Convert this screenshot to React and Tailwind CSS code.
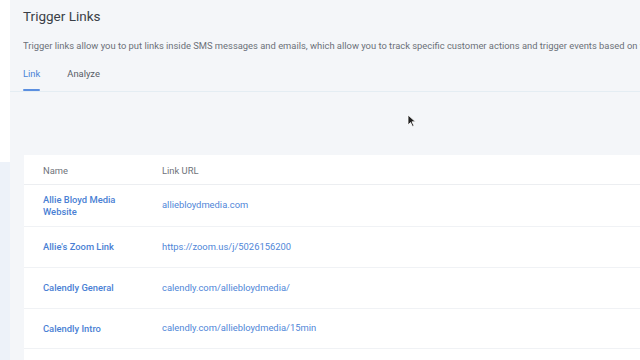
const rows = [
  { name: ["Allie Bloyd Media", "Website"], url: "alliebloydmedia.com", h: "h-[42px]" },
  { name: ["Allie's Zoom Link"], url: "https://zoom.us/j/5026156200", h: "h-[41px]" },
  { name: ["Calendly General"], url: "calendly.com/alliebloydmedia/", h: "h-[41px]" },
  { name: ["Calendly Intro"], url: "calendly.com/alliebloydmedia/15min", h: "h-[40px]" },
];

export default function App() {
  return (
    <div
      className="relative w-[640px] h-[360px] overflow-hidden flex bg-[#f4f6f9]"
      style={{ fontFamily: "Roboto, 'Liberation Sans', sans-serif" }}
    >
      {/* sidebar edge */}
      <div className="w-[10px] shrink-0 flex flex-col">
        <div className="h-[162px] bg-white" />
        <div className="flex-1 bg-[#edf2f9]" />
      </div>

      <div className="flex-1 flex flex-col min-w-0">
        <div className="pl-[13px] pt-[7px]">
          <h1 className="text-[13.5px] leading-[18px] text-[#3a3f47]">Trigger Links</h1>
          <p className="mt-[14px] text-[9.4px] leading-[14px] text-[#6b7078] whitespace-nowrap overflow-hidden">
            Trigger links allow you to put links inside SMS messages and emails, which allow you to track specific customer actions and trigger events based on what they click.
          </p>
          <div className="mt-[15px] flex gap-[27px] text-[9.4px] leading-[12px]">
            <div className="flex flex-col">
              <span className="text-[#4a82d6]">Link</span>
              <span className="mt-[9px] h-[2px] w-[17px] bg-[#5b8fe0] rounded" />
            </div>
            <span className="text-[#585d66]">Analyze</span>
          </div>
        </div>
        <div className="h-px bg-[#e4edf3]" />

        <div className="mt-[63px] ml-[14px] flex-1 bg-white">
          <div className="flex h-[30px] pt-[3px] items-center border-b border-[#eceef1] text-[9.4px] text-[#6f737a]">
            <span className="w-[138px] pl-[19px] shrink-0">Name</span>
            <span>Link URL</span>
          </div>
          {rows.map((r) => (
            <div
              key={r.url}
              className={`flex items-center border-b border-[#f0f2f5] text-[9.4px] ${r.h}`}
            >
              <div className="w-[138px] pl-[19px] shrink-0 font-medium text-[#4a7fd4] leading-[12px]">
                {r.name.map((n) => (
                  <div key={n}>{n}</div>
                ))}
              </div>
              <span className="text-[#4f86d8]">{r.url}</span>
            </div>
          ))}
        </div>
      </div>

      {/* mouse cursor */}
      <svg className="absolute left-[407px] top-[114px]" width="9" height="13" viewBox="0 0 9 13">
        <path d="M1 1 L1 11 L3.5 8.5 L5.5 12.5 L7 11.8 L5 7.8 L8.5 7.8 Z" fill="#222" stroke="#fff" strokeWidth="0.8" />
      </svg>
    </div>
  );
}
